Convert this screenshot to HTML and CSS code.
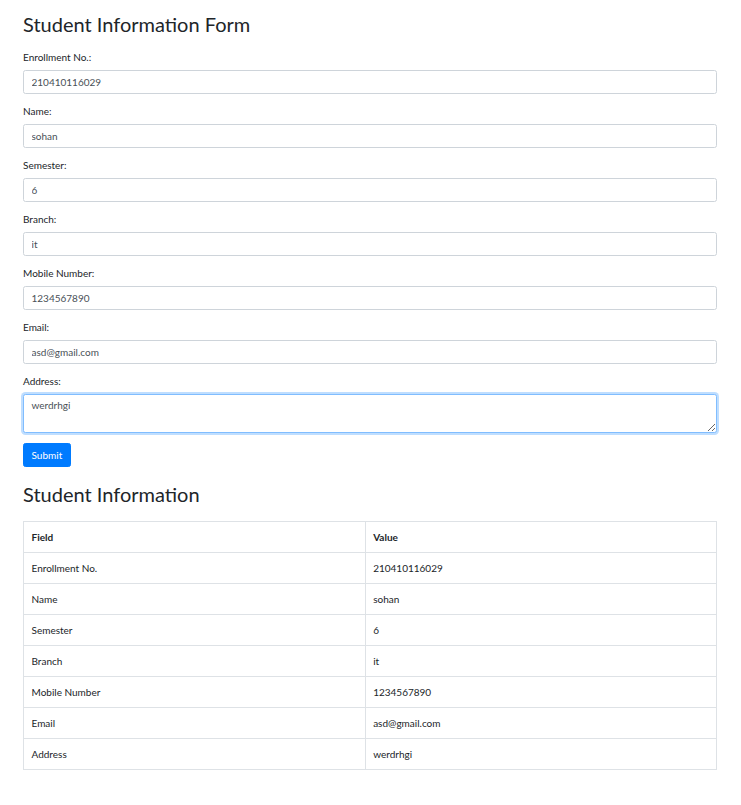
FILE: index.html
```html
<!DOCTYPE html>
<html lang="en">
<head>
<meta charset="utf-8">
<title>Student Information Form</title>
<link rel="stylesheet" href="styles.css">
</head>
<body>
<div class="container">
  <h2 class="heading heading-first">Student Information Form</h2>
  <form class="form">
    <div class="form-group">
      <label class="label">Enrollment No.:</label>
      <input class="input" type="text" value="210410116029">
    </div>
    <div class="form-group">
      <label class="label">Name:</label>
      <input class="input" type="text" value="sohan">
    </div>
    <div class="form-group">
      <label class="label">Semester:</label>
      <input class="input" type="text" value="6">
    </div>
    <div class="form-group">
      <label class="label">Branch:</label>
      <input class="input" type="text" value="it">
    </div>
    <div class="form-group">
      <label class="label">Mobile Number:</label>
      <input class="input" type="text" value="1234567890">
    </div>
    <div class="form-group">
      <label class="label">Email:</label>
      <input class="input" type="text" value="asd@gmail.com">
    </div>
    <div class="form-group">
      <label class="label">Address:</label>
      <textarea class="input textarea is-focused" rows="2">werdrhgi</textarea>
    </div>
    <button class="btn" type="button">Submit</button>
  </form>

  <h2 class="heading heading-second">Student Information</h2>
  <table class="table">
    <thead>
      <tr><th class="col-field">Field</th><th>Value</th></tr>
    </thead>
    <tbody>
      <tr><td>Enrollment No.</td><td>210410116029</td></tr>
      <tr><td>Name</td><td>sohan</td></tr>
      <tr><td>Semester</td><td>6</td></tr>
      <tr><td>Branch</td><td>it</td></tr>
      <tr><td>Mobile Number</td><td>1234567890</td></tr>
      <tr><td>Email</td><td>asd@gmail.com</td></tr>
      <tr><td>Address</td><td>werdrhgi</td></tr>
    </tbody>
  </table>
</div>
</body>
</html>
```
FILE: styles.css
```css
* { box-sizing: border-box; }

html, body {
  margin: 0;
  padding: 0;
  background: #fff;
}

body {
  font-family: Lato, "Open Sans", "Liberation Sans", sans-serif;
  font-size: 10px;
  line-height: 15px;
  color: #212529;
}

.container {
  padding: 12px 24px 20px 23px;
}

.heading {
  font-size: 20px;
  line-height: 24px;
  font-weight: 400;
  margin: 0 0 15px 0;
}

.heading-first { margin-bottom: 14px; }
.heading-second { margin-top: 15px; }

.form-group {
  margin-bottom: 10px;
}

.label {
  display: block;
  margin-bottom: 5px;
}

.input {
  display: block;
  width: 100%;
  height: 24px;
  padding: 3px 7.5px;
  font: inherit;
  color: #495057;
  background: #fff;
  border: 1px solid #ced4da;
  border-radius: 2.5px;
  outline: none;
}

.textarea {
  height: 39px;
  resize: vertical;
  padding: 3px 7.5px;
}

.is-focused {
  border-color: #80bdff;
  box-shadow: 0 0 0 2px rgba(0, 123, 255, 0.25);
}

.btn {
  display: inline-block;
  font: inherit;
  color: #fff;
  background: #007bff;
  border: 1px solid #007bff;
  border-radius: 2.5px;
  padding: 3.5px 7.5px;
  line-height: 15px;
  cursor: pointer;
}

.table {
  width: 100%;
  border-collapse: collapse;
}

.table th,
.table td {
  border: 1px solid #dee2e6;
  padding: 7.5px;
  text-align: left;
  vertical-align: top;
}

.table th {
  font-weight: 700;
}

.table .col-field {
  width: 49.3%;
}
```
